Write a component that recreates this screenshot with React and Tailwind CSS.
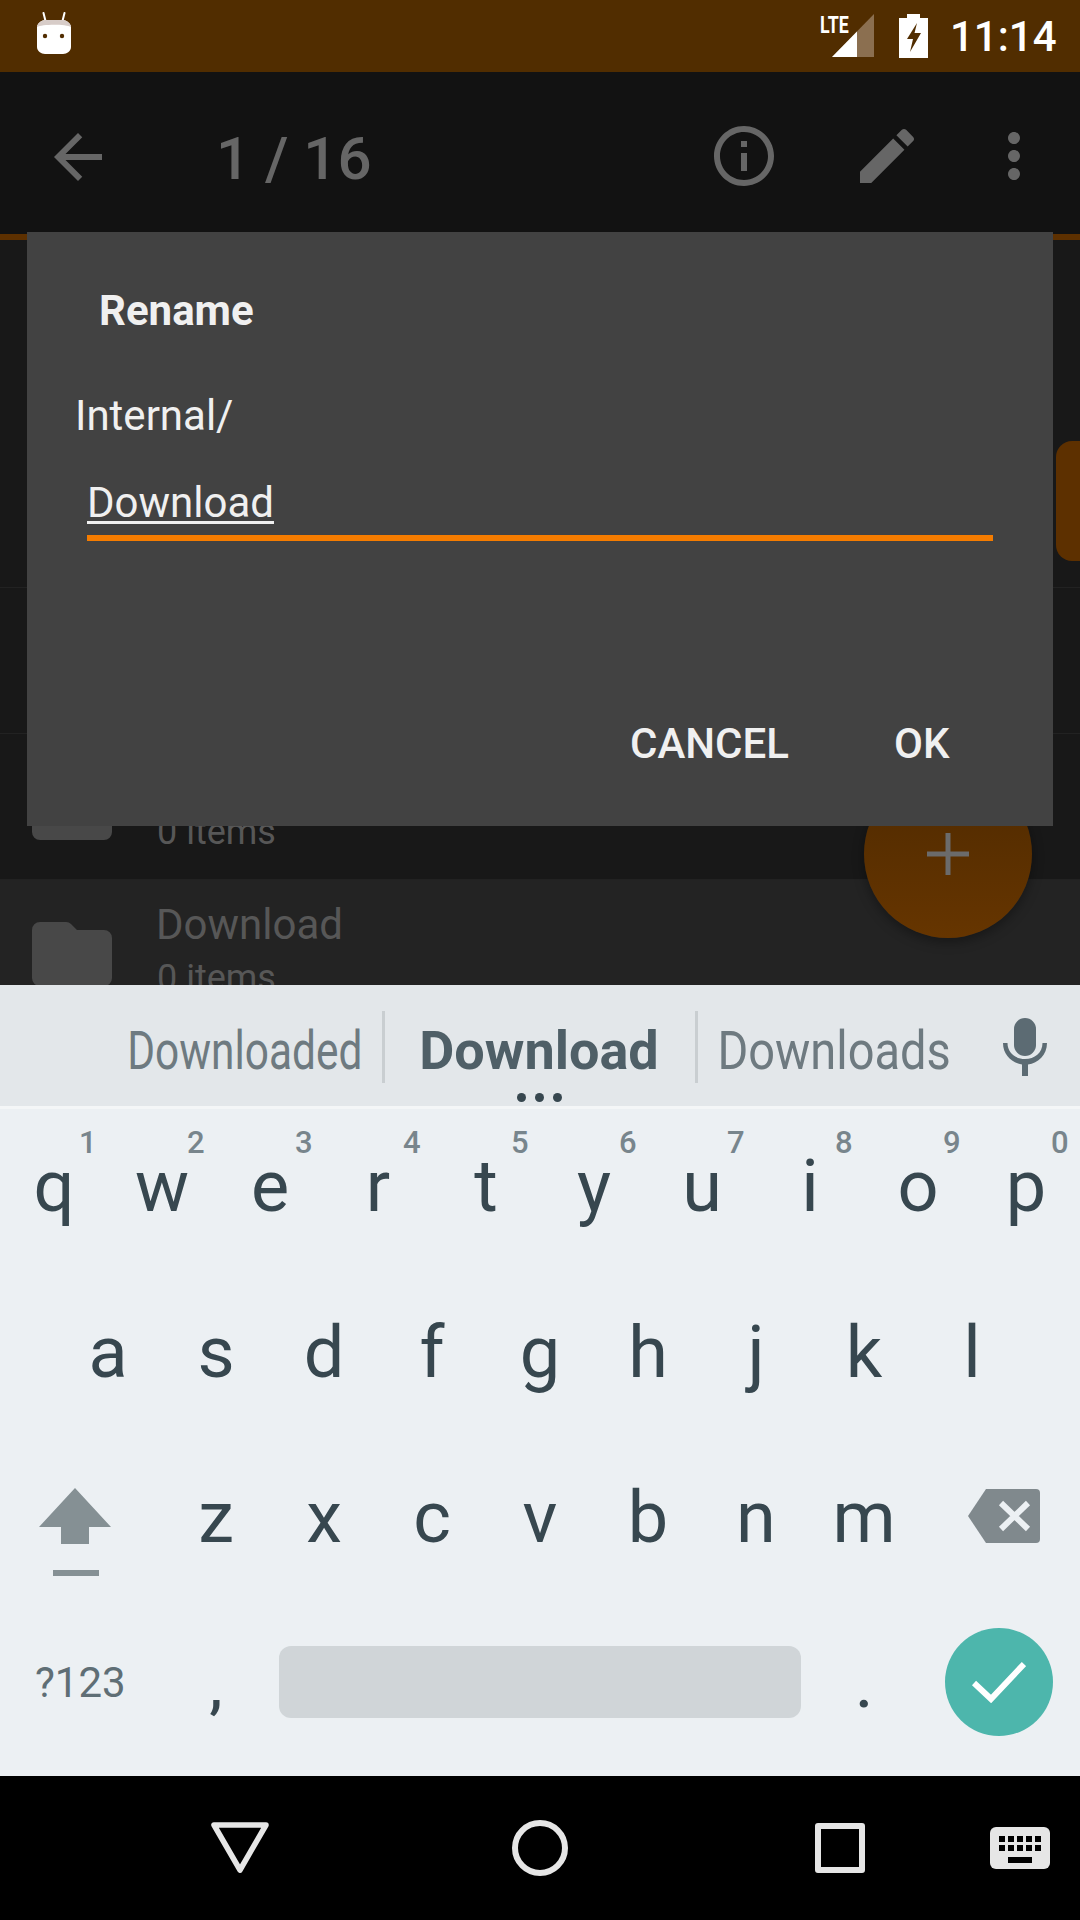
import React from "react";

const Mi = ({ d, className, size = 72 }) => (
  <svg width={size} height={size} viewBox="0 0 24 24" className={className} fill="currentColor"><path d={d} /></svg>
);

const Folder = ({ className }) => (
  <svg width="80" height="64" viewBox="0 0 80 64" className={className} fill="#484848">
    <path d="M8 0h26a7 7 0 0 1 5 2l6 6h27a8 8 0 0 1 8 8v40a8 8 0 0 1-8 8H8a8 8 0 0 1-8-8V8a8 8 0 0 1 8-8z" />
  </svg>
);

const Row = ({ name, bg = "bg-[#181818]" }) => (
  <div className={`relative h-[146px] shrink-0 border-t-[1px] border-[#222222] ${bg}`}>
    <Folder className="absolute left-[32px] top-[42px]" />
    {name && <div className="absolute left-[156px] top-[15px] text-[42px] leading-[60px] text-[#575757]">{name}</div>}
    <div className="absolute left-[157px] top-[73px] text-[36px] leading-[50px] text-[#575757]">0 items</div>
  </div>
);

const Key = ({ c, hint }) => (
  <div className="relative flex w-[108px] shrink-0 items-center justify-center text-[72px] leading-none text-[#37474f]">
    {hint && <span className="absolute left-[79px] top-[16px] text-[31px] leading-[36px] font-medium text-[#78858c]">{hint}</span>}
    {c}
  </div>
);

export default function App() {
  return (
    <div className="relative flex h-[1920px] w-[1080px] flex-col overflow-hidden bg-black font-['Roboto',sans-serif]">
      {/* status bar */}
      <div className="relative flex h-[72px] shrink-0 items-center bg-[#512d00] text-white">
        <svg width="40" height="44" viewBox="0 0 40 44" className="ml-[34px] mt-[-4px]">
          <path d="M9.5 1l2 8M30.5 1l-2 8" stroke="#fff" strokeWidth="2" strokeLinecap="round" />
          <path d="M3 15c0-3 4-7 8-7h18c4 0 8 4 8 7v20c0 4-4 7-8 7H11c-4 0-8-3-8-7z" fill="#fff" />
          <path d="M3 15c0-3 4-7 8-7h18c4 0 8 4 8 7-5-3-29-3-34 0z" fill="#d7ccc8" />
          <circle cx="11" cy="24" r="2.2" fill="#512d00" />
          <circle cx="28" cy="24" r="2.2" fill="#512d00" />
        </svg>
        <div className="absolute left-[820px] top-[11px] origin-left scale-x-[0.74] text-[24px] leading-[28px] font-bold">LTE</div>
        <svg width="42" height="43" viewBox="0 0 42 43" className="absolute left-[832px] top-[14px]">
          <path d="M0 43L42 0v43z" fill="#8b6f50" />
          <path d="M0 43L25 17.4V43z" fill="#fff" />
        </svg>
        <svg width="29" height="44" viewBox="0 0 29 44" className="absolute left-[899px] top-[14px]">
          <path d="M8 0h13v4h8v40H0V4h8z" fill="#fff" />
          <path d="M18 9L8 25h6l-3 13 11-19h-6.500z" fill="#512d00" />
        </svg>
        <div className="absolute left-[950px] top-[12px] text-[42px] leading-[50px] font-medium">11:14</div>
      </div>

      {/* app toolbar */}
      <div className="relative flex h-[162px] shrink-0 items-center bg-[#121212] pt-[8px] text-[#666666]">
        <Mi className="ml-[42px]" d="M20 11H7.83l5.59-5.59L12 4l-8 8 8 8 1.41-1.41L7.83 13H20v-2z" />
        <div className="ml-[102px] mt-[3px] text-[60px] leading-[72px] font-medium">1 / 16</div>
        <Mi className="absolute left-[708px] top-[48px]" d="M11 7h2v2h-2zm0 4h2v6h-2zm1-9C6.48 2 2 6.48 2 12s4.48 10 10 10 10-4.48 10-10S17.52 2 12 2zm0 18c-4.41 0-8-3.59-8-8s3.59-8 8-8 8 3.59 8 8-3.59 8-8 8z" />
        <Mi className="absolute left-[851px] top-[48px]" d="M3 17.25V21h3.75L17.81 9.94l-3.75-3.75L3 17.25zM20.71 7.04c.39-.39.39-1.02 0-1.41l-2.34-2.34c-.39-.39-1.02-.39-1.41 0l-1.83 1.83 3.75 3.75 1.83-1.83z" />
        <Mi className="absolute left-[978px] top-[48px]" d="M12 8c1.1 0 2-.9 2-2s-.9-2-2-2-2 .9-2 2 .9 2 2 2zm0 2c-1.1 0-2 .9-2 2s.9 2 2 2 2-.9 2-2-.9-2-2-2zm0 6c-1.1 0-2 .9-2 2s.9 2 2 2 2-.9 2-2-.9-2-2-2z" />
      </div>
      <div className="h-[6px] shrink-0 bg-[#5d3000]" />

      {/* dimmed list */}
      <div className="relative flex h-[745px] shrink-0 flex-col overflow-hidden bg-[#181818]">
        <div className="h-[347px] shrink-0" />
        <Row />
        <Row />
        <Row name="Download" bg="bg-[#232323]" />
        <div className="absolute left-[1056px] top-[201px] h-[120px] w-[40px] rounded-[16px] bg-[#5d3000]" />
        <div className="absolute left-[864px] top-[530px] flex h-[168px] w-[168px] items-center justify-center rounded-full bg-linear-to-b from-[#4f2a00] to-[#663500] shadow-[0_4px_12px_rgba(0,0,0,0.35)]">
          <svg width="42" height="42" viewBox="0 0 42 42" fill="#6b6b6b"><path d="M18.500 0h5v18.500H42v5H23.500V42h-5V23.500H0v-5h18.500z" /></svg>
        </div>
      </div>

      {/* keyboard */}
      <div className="flex h-[791px] shrink-0 flex-col bg-[#ecf0f3]">
        <div className="relative h-[121px] shrink-0 bg-[#e3e7ea]">
          <div className="absolute left-[130px] top-[36px] flex w-[230px] justify-center text-[54px] leading-[60px] text-[#6e7a80]"><span className="inline-block scale-x-[0.785]">Downloaded</span></div>
          <div className="absolute left-[382px] top-[26px] h-[72px] w-[3px] bg-[#c9ced1]" />
          <div className="absolute left-[415px] top-[36px] flex w-[248px] justify-center text-[54px] leading-[60px] font-bold text-[#4f5f67]"><span className="inline-block">Download</span></div>
          <div className="absolute left-[695px] top-[26px] h-[72px] w-[3px] bg-[#c9ced1]" />
          <div className="absolute left-[718px] top-[36px] flex w-[232px] justify-center text-[54px] leading-[60px] text-[#6e7a80]"><span className="inline-block scale-x-[0.87]">Downloads</span></div>
          <svg width="44" height="58" viewBox="0 0 44 58" className="absolute left-[1003px] top-[33px]" fill="#5c6b73">
            <rect x="11" y="0" width="22" height="38" rx="11" />
            <path d="M0 25h4.500c0 10 8 16 17.500 16s17.500-6 17.500-16H44c0 12-9 20-19 21.500V58h-6V46.500C9 45 0 37 0 25z" />
          </svg>
          <div className="absolute left-[517px] top-[108px] flex gap-[9px]">
            <span className="h-[9px] w-[9px] rounded-full bg-[#37474f]" />
            <span className="h-[9px] w-[9px] rounded-full bg-[#37474f]" />
            <span className="h-[9px] w-[9px] rounded-full bg-[#37474f]" />
          </div>
        </div>
        <div className="h-[3px] shrink-0 bg-[#f4f6f7]" />

        <div className="flex h-[156px] shrink-0">
          {[["q","1"],["w","2"],["e","3"],["r","4"],["t","5"],["y","6"],["u","7"],["i","8"],["o","9"],["p","0"]].map(([c,h]) => <Key key={c} c={c} hint={h} />)}
        </div>
        <div className="flex h-[176px] shrink-0 pl-[54px]">
          {"asdfghjkl".split("").map((c) => <Key key={c} c={c} />)}
        </div>
        <div className="flex h-[154px] shrink-0">
          <div className="flex w-[162px] shrink-0 flex-col items-start pl-[39px] pt-[47px]">
            <svg width="72" height="88" viewBox="0 0 72 88" fill="#859094">
              <path d="M36 0l36 39H50v17H22V39H0z" />
              <rect x="14" y="82" width="46" height="6" />
            </svg>
          </div>
          {"zxcvbnm".split("").map((c) => <Key key={c} c={c} />)}
          <div className="flex flex-1 items-start pl-[50px] pt-[48px]">
            <svg width="72" height="54" viewBox="0 0 72 54">
              <path d="M18 0h50a4 4 0 0 1 4 4v46a4 4 0 0 1-4 4H18L0 27z" fill="#80898d" />
              <path d="M33 14l27 26M60 14L33 40" stroke="#ecf0f3" strokeWidth="6" />
            </svg>
          </div>
        </div>
        <div className="flex h-[181px] shrink-0 items-center pb-[7px]">
          <div className="flex w-[162px] shrink-0 items-center pl-[35px] pt-[2px] text-[42px] leading-none text-[#5f6e75]"><span>?123</span></div>
          <div className="flex w-[108px] shrink-0 justify-center pt-[9px] text-[60px] leading-none font-medium text-[#37474f]">,</div>
          <div className="ml-[9px] h-[72px] w-[522px] shrink-0 rounded-[12px] bg-[#d0d5d8]" />
          <div className="ml-[9px] flex w-[108px] shrink-0 justify-center pt-[9px] text-[60px] leading-none font-medium text-[#37474f]">.</div>
          <div className="ml-[27px] flex h-[108px] w-[108px] shrink-0 items-center justify-center rounded-full bg-[#4db6ac]">
            <svg width="54" height="42" viewBox="0 0 54 42" fill="none" stroke="#fff" strokeWidth="6"><path d="M2 22l17 16L52 3" /></svg>
          </div>
        </div>
      </div>

      {/* nav bar */}
      <div className="relative h-[144px] shrink-0 bg-black">
        <svg width="58" height="52" viewBox="0 0 58 52" className="absolute left-[211px] top-[46px]" fill="none" stroke="#e6e6e6" strokeWidth="5.500" strokeLinejoin="round">
          <path d="M3 3h52L29 48z" />
        </svg>
        <div className="absolute left-[512px] top-[44px] h-[56px] w-[56px] rounded-full border-[6px] border-[#e6e6e6]" />
        <div className="absolute left-[815px] top-[47px] h-[50px] w-[50px] rounded-[3px] border-[6px] border-[#e6e6e6]" />
        <svg width="60" height="42" viewBox="0 0 60 42" className="absolute left-[990px] top-[51px]">
          <rect width="60" height="42" rx="6" fill="#e6e6e6" />
          <g fill="#000">
            <rect x="9" y="9" width="6" height="6" /><rect x="18" y="9" width="6" height="6" /><rect x="27" y="9" width="6" height="6" /><rect x="36" y="9" width="6" height="6" /><rect x="45" y="9" width="6" height="6" />
            <rect x="9" y="18" width="6" height="6" /><rect x="18" y="18" width="6" height="6" /><rect x="27" y="18" width="6" height="6" /><rect x="36" y="18" width="6" height="6" /><rect x="45" y="18" width="6" height="6" />
            <rect x="18" y="30" width="24" height="6" />
          </g>
        </svg>
      </div>

      {/* dialog */}
      <div className="absolute left-[27px] top-[232px] h-[594px] w-[1026px] bg-[#424242] text-[#f0f0f0]">
        <div className="absolute left-[72px] top-[54px] text-[42px] leading-[50px] font-bold">Rename</div>
        <div className="absolute left-[48px] top-[154px] text-[42px] leading-[60px]">Internal/</div>
        <div className="absolute left-[60px] top-[241px] text-[42px] leading-[60px] underline decoration-[3px] underline-offset-[4px]">Download</div>
        <div className="absolute left-[60px] top-[303px] h-[6px] w-[906px] bg-[#f57c00]" />
        <div className="absolute left-[603px] top-[482px] text-[42px] leading-[60px] font-medium">CANCEL</div>
        <div className="absolute left-[867px] top-[482px] text-[42px] leading-[60px] font-medium">OK</div>
      </div>
    </div>
  );
}
